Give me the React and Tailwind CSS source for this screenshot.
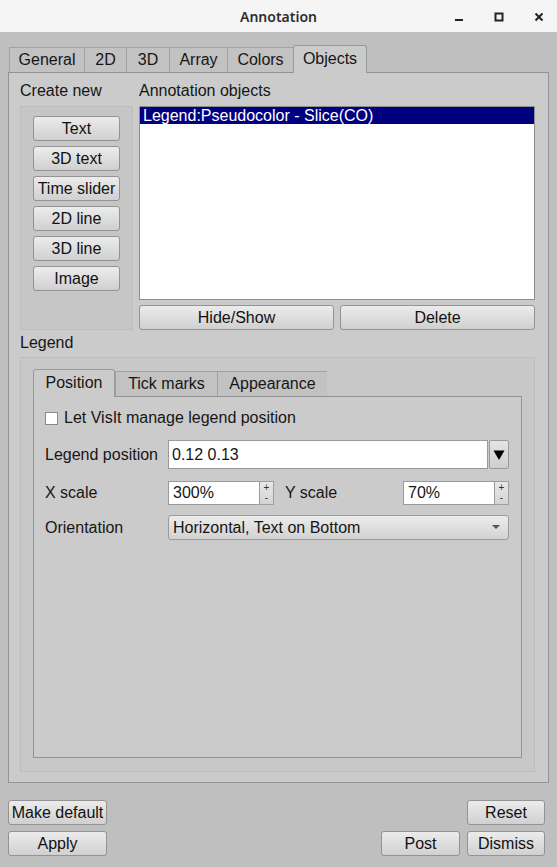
import React from "react";

function Btn({ children, className = "" }) {
  return (
    <div
      className={
        "flex items-center justify-center h-[25px] border border-[#939393] rounded-[3px] bg-gradient-to-b from-[#ececec] to-[#d0d0d0] text-[16px] text-[#111] leading-none " +
        className
      }
    >
      {children}
    </div>
  );
}

function Tab({ label, active, className = "" }) {
  return active ? (
    <div
      className={
        "relative z-10 -mb-px h-[28px] flex items-start pt-px justify-center border border-b-0 border-[#9a9a9a] rounded-t-[3px] bg-[#cbcbcb] " +
        className
      }
    >
      {label}
    </div>
  ) : (
    <div
      className={
        "h-[25px] flex items-center justify-center border border-b-0 border-r-0 border-[#a2a2a2] bg-[#c2c2c2] " +
        className
      }
    >
      {label}
    </div>
  );
}

function Spin({ value, w }) {
  return (
    <div className="flex h-[24px]">
      <div className={"bg-white border border-[#9a9a9a] flex items-center pl-[4px] " + w}>{value}</div>
      <div className="w-[14px] border border-l-0 border-[#a0a0a0] bg-gradient-to-b from-[#e8e8e8] to-[#d4d4d4] flex flex-col items-center justify-center text-[10px] leading-[10px] text-[#333]">
        <span>+</span>
        <span>-</span>
      </div>
    </div>
  );
}

export default function App() {
  return (
    <div
      className="w-[557px] h-[867px] bg-[#bfbfbf] text-[16px] text-[#161616] overflow-hidden"
      style={{ fontFamily: '"Liberation Sans", Arial, sans-serif' }}
    >
      {/* Title bar */}
      <div className="relative h-[33px] bg-[#f5f5f5] border-b border-[#bdbdbd] flex items-center justify-center">
        <span className="text-[14px] font-semibold text-[#2e2e2e]" style={{ fontFamily: '"Noto Sans", sans-serif' }}>
          Annotation
        </span>
        <div className="absolute right-[12px] top-0 h-[33px] flex items-center gap-[28px] text-[#222]">
          <svg width="12" height="12" viewBox="0 0 12 12">
            <rect x="2" y="8" width="8" height="2" fill="#222" />
          </svg>
          <svg width="12" height="12" viewBox="0 0 12 12">
            <rect x="2.5" y="2.5" width="7" height="7" fill="none" stroke="#222" strokeWidth="2" />
          </svg>
          <svg width="12" height="12" viewBox="0 0 12 12">
            <path d="M2.5 2.5 L9.5 9.5 M9.5 2.5 L2.5 9.5" stroke="#222" strokeWidth="2" />
          </svg>
        </div>
      </div>

      <div className="px-[8px] pt-[12px]">
        {/* Main tabs */}
        <div className="flex items-end h-[27px] pl-px">
          <Tab label="General" className="w-[75px]" />
          <Tab label="2D" className="w-[42px]" />
          <Tab label="3D" className="w-[43px]" />
          <Tab label="Array" className="w-[58px]" />
          <Tab label="Colors" className="w-[66px] border-r" />
          <Tab label="Objects" active className="w-[74px]" />
        </div>

        {/* Pane */}
        <div className="h-[711px] border border-[#939393] bg-[#cbcbcb] pl-[11px] pr-[13px] pt-[9px]">
          <div className="flex gap-[6px]">
            <div className="w-[113px]">
              <div className="h-[18px] leading-[18px] mb-[6px]">Create new</div>
              <div className="h-[224px] border border-[#bdbdbd] bg-[#c6c6c6] pt-[9px] flex flex-col items-center gap-[5px]">
                <Btn className="w-[87px]">Text</Btn>
                <Btn className="w-[87px]">3D text</Btn>
                <Btn className="w-[87px]">Time slider</Btn>
                <Btn className="w-[87px]">2D line</Btn>
                <Btn className="w-[87px]">3D line</Btn>
                <Btn className="w-[87px]">Image</Btn>
              </div>
            </div>
            <div className="flex-1">
              <div className="h-[18px] leading-[18px] mb-[6px]">Annotation objects</div>
              <div className="h-[194px] border border-[#8e8e8e] bg-white">
                <div className="h-[17px] bg-[#000080] text-white leading-[17px] pl-[3px]">
                  Legend:Pseudocolor - Slice(CO)
                </div>
              </div>
              <div className="flex gap-[6px] mt-[5px]">
                <Btn className="flex-1">Hide/Show</Btn>
                <Btn className="flex-1">Delete</Btn>
              </div>
            </div>
          </div>

          {/* Legend */}
          <div className="h-[18px] leading-[18px] mt-[4px] mb-[5px]">Legend</div>
          <div className="h-[415px] border border-[#bdbdbd] bg-[#c8c8c8] px-[12px] pt-[10px]">
            <div className="flex items-end h-[28px]">
              <Tab label="Position" active className="w-[82px]" />
              <Tab label="Tick marks" className="w-[102px]" />
              <Tab label="Appearance" className="w-[110px] border-r" />
            </div>
            <div className="h-[362px] border border-[#939393] bg-[#cbcbcb] pl-[11px] pr-[12px] pt-[13px]">
              <div className="flex items-center gap-[6px] h-[16px]">
                <div className="w-[13px] h-[13px] bg-white border border-[#8a8a8a]" />
                <span>Let VisIt manage legend position</span>
              </div>

              <div className="flex items-center mt-[14px] h-[29px]">
                <span className="w-[123px]">Legend position</span>
                <div className="flex-1 h-[29px] bg-white border border-[#9a9a9a] flex items-center pl-[3px]">
                  0.12 0.13
                </div>
                <div className="w-[20px] h-[29px] ml-px border border-[#9a9a9a] rounded-[2px] bg-gradient-to-b from-[#e4e4e4] to-[#cfcfcf] flex items-center justify-center">
                  <svg width="12" height="12" viewBox="0 0 12 12">
                    <path d="M0.5 1.5 L11.5 1.5 L6 11 Z" fill="#000" />
                  </svg>
                </div>
              </div>

              <div className="flex items-center mt-[12px] h-[24px]">
                <span className="w-[123px]">X scale</span>
                <Spin value="300%" w="w-[92px]" />
                <span className="ml-[11px] w-[118px]">Y scale</span>
                <Spin value="70%" w="w-[92px]" />
              </div>

              <div className="flex items-center mt-[10px] h-[25px]">
                <span className="w-[123px]">Orientation</span>
                <div className="flex-1 h-[25px] border border-[#9a9a9a] rounded-[3px] bg-gradient-to-b from-[#ececec] to-[#d2d2d2] flex items-center justify-between pl-[4px] pr-[8px]">
                  <span>Horizontal, Text on Bottom</span>
                  <svg width="8" height="5" viewBox="0 0 8 5">
                    <path d="M0 0 L8 0 L4 4 Z" fill="#555" />
                  </svg>
                </div>
              </div>
            </div>
          </div>
        </div>

        {/* Bottom buttons */}
        <div className="mt-[17px] flex justify-between">
          <div className="flex flex-col gap-[6px]">
            <Btn className="w-[99px]">Make default</Btn>
            <Btn className="w-[99px]">Apply</Btn>
          </div>
          <div className="flex flex-col items-end gap-[6px] pr-[4px]">
            <Btn className="w-[78px]">Reset</Btn>
            <div className="flex gap-[7px]">
              <Btn className="w-[79px]">Post</Btn>
              <Btn className="w-[78px]">Dismiss</Btn>
            </div>
          </div>
        </div>
      </div>
    </div>
  );
}
